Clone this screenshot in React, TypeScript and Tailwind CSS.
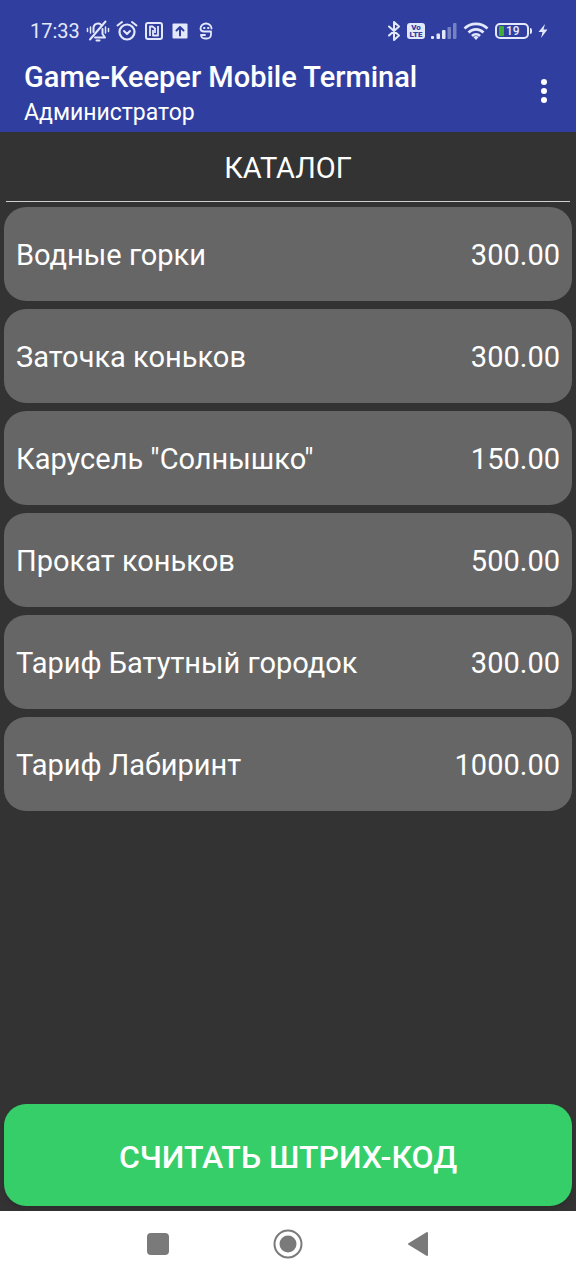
import type { ReactNode } from "react";

const CATALOG = [
  { name: "Водные горки", price: "300.00" },
  { name: "Заточка коньков", price: "300.00" },
  { name: 'Карусель "Солнышко"', price: "150.00" },
  { name: "Прокат коньков", price: "500.00" },
  { name: "Тариф Батутный городок", price: "300.00" },
  { name: "Тариф Лабиринт", price: "1000.00" },
];

function Glyph({ box, className, children }: { box: string; className: string; children: ReactNode }) {
  return (
    <svg
      viewBox={box}
      className={`shrink-0 ${className}`}
      fill="none"
      stroke="currentColor"
      strokeWidth="2"
      strokeLinecap="round"
      strokeLinejoin="round"
      aria-hidden="true"
    >
      {children}
    </svg>
  );
}

function StatusBar() {
  return (
    <div className="flex h-[60px] items-center justify-between pt-px pr-7 pl-[30px] text-[#e4e8fb]">
      <div className="flex items-center gap-1.5">
        <span className="text-xl">17:33</span>

        {/* Muted bell */}
        <Glyph box="0 0 24 22" className="h-[22px] w-6">
          <path d="M7.500 12V8a4.500 4.500 0 0 1 7.500-3.300" />
          <path d="M16.500 9v5l2.500 3.500H9" />
          <path d="M10.500 20.500h3" />
          <path d="M19.500 1.500L4 19.500" />
          <path d="M4.500 7v6M19.500 7v6M1.500 8.500v3M22.500 8.500v3" strokeWidth="1.500" />
        </Glyph>

        {/* Alarm clock */}
        <Glyph box="0 0 22 22" className="h-[22px] w-[22px]">
          <circle cx="11" cy="12" r="7.500" strokeWidth="2.200" />
          <path d="M1.500 5.500L6 2M20.500 5.500L16 2" />
          <path d="M8 11l3 3 3-3" />
        </Glyph>

        {/* NFC */}
        <Glyph box="0 0 20 20" className="h-5 w-5">
          <rect x="2" y="2" width="16" height="16" rx="2" />
          <path d="M6 15V5.500h2.500l2.500 2V12M9 9v5.500h5V5" strokeWidth="1.800" strokeLinecap="butt" />
        </Glyph>

        {/* Upload */}
        <Glyph box="0 0 20 20" className="h-5 w-5">
          <rect x="2.500" y="2.500" width="15" height="15" rx="1" fill="currentColor" stroke="none" />
          <path d="M10 14.500V6.500M6.500 9.500L10 6l3.500 3.500" stroke="#303f9f" />
        </Glyph>

        {/* Round messenger mark */}
        <Glyph box="0 0 20 20" className="h-5 w-5">
          <path d="M15.500 7.500A5.500 5 0 0 0 4.500 7.500C4.500 9.500 6 10.500 8 10.500H15v3a4 4 0 0 1-4 4H9a4 4 0 0 1-4-3.500H9" strokeWidth="1.800" />
          <path d="M8 7h.5M12 7h.5" />
        </Glyph>
      </div>

      <div className="flex items-center gap-1.5">
        {/* Bluetooth */}
        <Glyph box="0 0 14 22" className="h-[22px] w-[14px]">
          <path d="M2 6.500l10 9-5 4.500V2l5 4.500-10 9" />
        </Glyph>

        <span className="flex h-4 w-[18px] flex-col items-center justify-center rounded-[3px] bg-[#e4e8fb] text-[8px] leading-[7px] font-black text-[#303f9f]">
          <span>Vo</span>
          <span>LTE</span>
        </span>

        {/* Signal strength */}
        <Glyph box="0 0 26 18" className="h-[18px] w-[26px]">
          <g fill="currentColor" stroke="none">
            <rect x="0" y="14" width="3" height="3" rx="1" />
            <rect x="5.500" y="11.500" width="3.500" height="5.500" rx="1" />
            <rect x="11" y="8" width="3.500" height="9" rx="1" />
            <rect x="16.500" y="5" width="3.500" height="12" rx="1" opacity="0.4" />
            <rect x="22" y="1" width="3.500" height="16" rx="1" opacity="0.4" />
          </g>
        </Glyph>

        {/* Wi-Fi */}
        <Glyph box="0 0 26 20" className="h-5 w-[26px]">
          <g strokeWidth="2.600" strokeLinecap="butt">
            <path d="M1.500 7.500a16.500 16.500 0 0 1 23 0" />
            <path d="M5.500 11.500a10.500 10.500 0 0 1 15 0" />
            <path d="M9 15a5.500 5.500 0 0 1 8 0" />
          </g>
          <path d="M10.500 16.200a3.500 3.500 0 0 1 5 0L13 19z" fill="currentColor" stroke="none" />
        </Glyph>

        {/* Battery */}
        <div className="flex items-center gap-px">
          <span className="flex h-4 w-[34px] items-center gap-0.5 rounded-[5px] border-2 border-current px-0.5 text-xs leading-none font-medium">
            <span className="h-[10px] w-[5px] rounded-[1px] bg-[#41ad35]" />
            19
          </span>
          <span className="h-1.5 w-0.5 rounded-r-sm bg-current" />
        </div>

        {/* Charging */}
        <Glyph box="0 0 10 16" className="h-4 w-[10px]">
          <path d="M7 1L0.500 9h4L3 15l6.500-8.500h-4z" fill="currentColor" stroke="none" />
        </Glyph>
      </div>
    </div>
  );
}

function AppBar() {
  return (
    <div className="flex h-[72px] items-center justify-between pr-5 pl-6 text-white">
      <div className="pb-0.5">
        <h1 className="text-[29px] leading-[35px] font-medium">Game-Keeper Mobile Terminal</h1>
        <p className="text-[23px] leading-[35px]">Администратор</p>
      </div>
      <button type="button" aria-label="Меню" className="flex h-12 w-6 items-center justify-center pb-2.5">
        <svg viewBox="0 0 6 24" className="h-6 w-1.5" fill="currentColor" aria-hidden="true">
          <circle cx="3" cy="3" r="3" />
          <circle cx="3" cy="12" r="3" />
          <circle cx="3" cy="21" r="3" />
        </svg>
      </button>
    </div>
  );
}

function NavBar() {
  return (
    <nav className="flex h-[69px] items-center justify-center gap-[98px] bg-white pb-1 text-[#7a7a7a]">
      <button type="button" aria-label="Недавние" className="flex size-8 items-center justify-center">
        <span className="size-[22px] rounded-[4px] bg-current" />
      </button>
      <button type="button" aria-label="Домой" className="flex size-8 items-center justify-center">
        <svg viewBox="0 0 30 30" className="size-[30px]" fill="currentColor" aria-hidden="true">
          <circle cx="15" cy="15" r="13.500" fill="none" stroke="currentColor" strokeWidth="2" />
          <circle cx="15" cy="15" r="8.500" />
        </svg>
      </button>
      <button type="button" aria-label="Назад" className="flex size-8 items-center justify-center">
        <svg viewBox="0 0 22 26" className="h-[26px] w-[22px]" fill="currentColor" stroke="currentColor" strokeWidth="2" strokeLinejoin="round" aria-hidden="true">
          <path d="M2 13L20 2v22z" />
        </svg>
      </button>
    </nav>
  );
}

export default function App() {
  return (
    <div className="flex min-h-screen flex-col bg-[#333333] font-[Roboto,'Noto_Sans',sans-serif]">
      <header className="bg-[#303f9f]">
        <StatusBar />
        <AppBar />
      </header>

      <main className="flex flex-1 flex-col px-1 pb-[5px]">
        <h2 className="mx-0.5 flex h-[70px] items-center justify-center border-b border-[#d0d0d0] pt-1 text-[29px] text-white">
          КАТАЛОГ
        </h2>

        <ul className="mt-[5px] flex flex-col gap-2">
          {CATALOG.map((item) => (
            <li key={item.name}>
              <button
                type="button"
                className="flex h-[94px] w-full items-center justify-between rounded-[22px] bg-[#666666] px-3 pt-1 text-left text-[29px] text-white"
              >
                <span>{item.name}</span>
                <span>{item.price}</span>
              </button>
            </li>
          ))}
        </ul>

        <button
          type="button"
          className="mt-auto h-[102px] w-full rounded-[22px] bg-[#36ce68] pt-1 text-[32px] font-medium text-white shadow-md"
        >
          СЧИТАТЬ ШТРИХ-КОД
        </button>
      </main>

      <NavBar />
    </div>
  );
}
